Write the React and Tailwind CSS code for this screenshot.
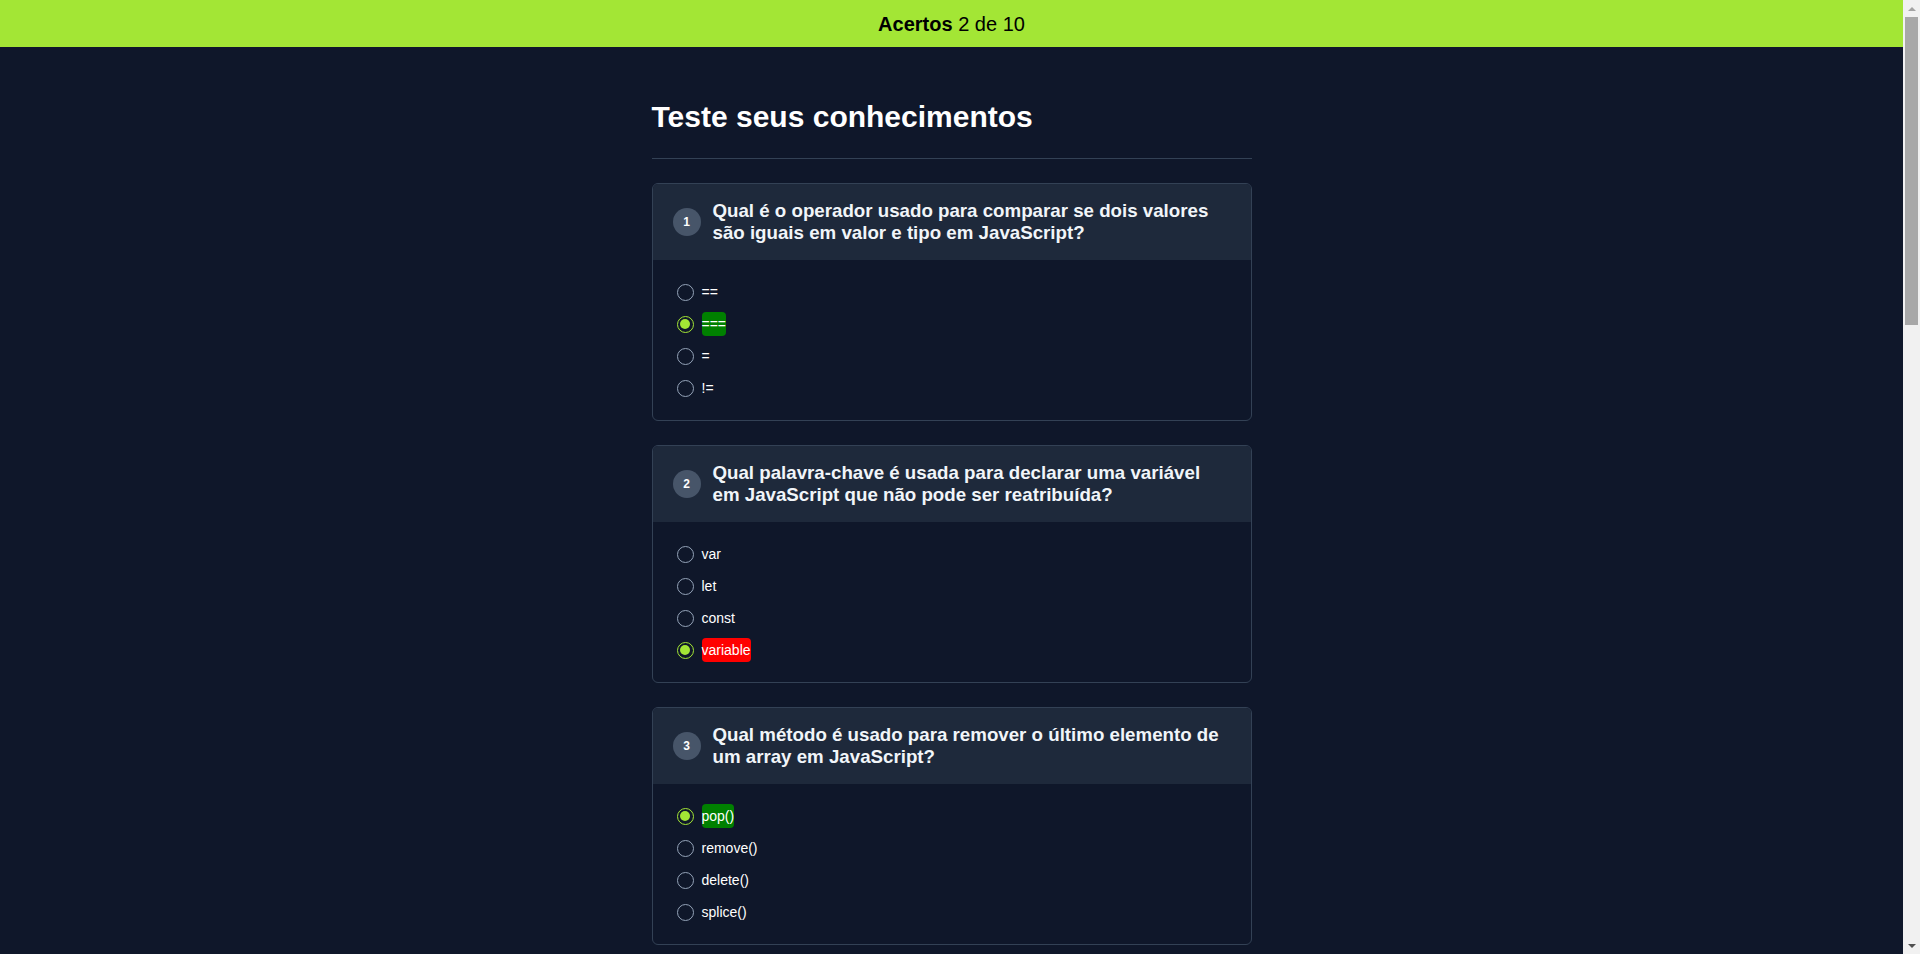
import { useState } from 'react';

const questions = [
  {
    text: 'Qual é o operador usado para comparar se dois valores são iguais em valor e tipo em JavaScript?',
    options: ['==', '===', '=', '!='],
    answer: 1,
  },
  {
    text: 'Qual palavra-chave é usada para declarar uma variável em JavaScript que não pode ser reatribuída?',
    options: ['var', 'let', 'const', 'variable'],
    answer: 2,
  },
  {
    text: 'Qual método é usado para remover o último elemento de um array em JavaScript?',
    options: ['pop()', 'remove()', 'delete()', 'splice()'],
    answer: 0,
  },
  {
    text: 'Qual função converte uma string em um número inteiro em JavaScript?',
    options: ['parseInt()', 'toString()', 'Number.int()', 'parseFloat()'],
    answer: 0,
  },
  {
    text: 'Qual método é usado para adicionar um elemento ao final de um array em JavaScript?',
    options: ['push()', 'pop()', 'shift()', 'unshift()'],
    answer: 0,
  },
  {
    text: 'Qual é o resultado da expressão typeof null em JavaScript?',
    options: ['"object"', '"null"', '"undefined"', '"number"'],
    answer: 0,
  },
  {
    text: 'Qual método é usado para converter um objeto JavaScript em uma string JSON?',
    options: ['JSON.stringify()', 'JSON.parse()', 'toString()', 'JSON.convert()'],
    answer: 0,
  },
  {
    text: 'Qual palavra-chave é usada para declarar uma função assíncrona em JavaScript?',
    options: ['async', 'await', 'defer', 'promise'],
    answer: 0,
  },
  {
    text: 'Qual método retorna um novo array apenas com os elementos que passam em um teste?',
    options: ['filter()', 'map()', 'forEach()', 'reduce()'],
    answer: 0,
  },
  {
    text: 'Qual operador lógico representa a operação "E" em expressões JavaScript?',
    options: ['&&', '||', '!', '&'],
    answer: 0,
  },
];

function Radio({ checked }) {
  return (
    <span
      className={`flex h-[17px] w-[17px] shrink-0 items-center justify-center rounded-full border-[1.5px] ${
        checked ? 'border-[#a3e635]' : 'border-[#94a3b8]'
      }`}
    >
      {checked ? <span className="h-[10px] w-[10px] rounded-full bg-[#a3e635]" /> : null}
    </span>
  );
}

function QuestionCard({ index, question, selected, onSelect }) {
  return (
    <div className="overflow-hidden rounded-md border border-[#334155]">
      <div className="flex items-center gap-3 bg-[#1e293b] py-4 pl-5 pr-6">
        <span className="flex h-7 w-7 shrink-0 items-center justify-center rounded-full bg-[#475569] text-xs font-bold text-white">
          {index + 1}
        </span>
        <h3 className="text-[18.72px] font-bold leading-[22px] text-[#f1f5f9]">{question.text}</h3>
      </div>
      <div className="flex flex-col gap-2 px-6 py-5">
        {question.options.map((option, i) => {
          const checked = selected === i;
          const color = checked ? (i === question.answer ? 'bg-[#008000]' : 'bg-[#ff0000]') : '';
          return (
            <label key={option} className="flex h-6 cursor-pointer items-center gap-2" onClick={() => onSelect(i)}>
              <Radio checked={checked} />
              <span className={`rounded-[4px] text-sm leading-6 text-white ${color}`}>{option}</span>
            </label>
          );
        })}
      </div>
    </div>
  );
}

// the reference was taken with a classic 17px browser scrollbar on the right
function Scrollbar() {
  return (
    <div className="fixed right-0 top-0 flex h-screen w-[17px] flex-col items-center bg-[#f1f1f1]">
      <div className="flex h-[17px] items-center justify-center">
        <span className="h-0 w-0 border-x-[4px] border-b-[4px] border-x-transparent border-b-[#a3a3a3]" />
      </div>
      <div className="h-[308px] w-[13px] bg-[#a8a8a8]" />
      <div className="flex-1" />
      <div className="flex h-[17px] items-center justify-center">
        <span className="h-0 w-0 border-x-[4px] border-t-[4px] border-x-transparent border-t-[#505050]" />
      </div>
    </div>
  );
}

export default function App() {
  const [answers, setAnswers] = useState({ 0: 1, 1: 3, 2: 0 });
  const score = Object.entries(answers).filter(([q, a]) => questions[q].answer === a).length;

  return (
    <div className="min-h-screen bg-[#0f172a] pr-[17px] font-['Liberation_Sans',Arial,sans-serif]">
      <div className="flex h-[47px] items-center justify-center bg-[#a3e635] text-xl text-black">
        <span>
          <b>Acertos</b> {score} de {questions.length}
        </span>
      </div>
      <main className="mx-auto max-w-[600px] pb-20 pt-[53px]">
        <h1 className="text-3xl font-bold leading-[34px] text-white">Teste seus conhecimentos</h1>
        <hr className="my-6 border-[#334155]" />
        <div className="flex flex-col gap-6">
          {questions.map((q, i) => (
            <QuestionCard
              key={i}
              index={i}
              question={q}
              selected={answers[i]}
              onSelect={(opt) => setAnswers({ ...answers, [i]: opt })}
            />
          ))}
        </div>
      </main>
      <Scrollbar />
    </div>
  );
}
